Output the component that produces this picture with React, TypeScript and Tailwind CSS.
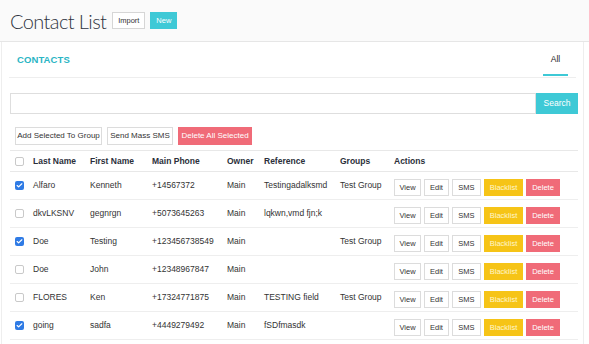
import { Check } from "lucide-react";

type Contact = {
  last: string;
  first: string;
  phone: string;
  owner: string;
  reference: string;
  group: string;
  checked: boolean;
};

const contacts: Contact[] = [
  { last: "Alfaro", first: "Kenneth", phone: "+14567372", owner: "Main", reference: "Testingadalksmd", group: "Test Group", checked: true },
  { last: "dkvLKSNV", first: "gegnrgn", phone: "+5073645263", owner: "Main", reference: "lqkwn,vmd fjn;k", group: "", checked: false },
  { last: "Doe", first: "Testing", phone: "+123456738549", owner: "Main", reference: "", group: "Test Group", checked: true },
  { last: "Doe", first: "John", phone: "+12348967847", owner: "Main", reference: "", group: "", checked: false },
  { last: "FLORES", first: "Ken", phone: "+17324771875", owner: "Main", reference: "TESTING field", group: "Test Group", checked: false },
  { last: "going", first: "sadfa", phone: "+4449279492", owner: "Main", reference: "fSDfmasdk", group: "", checked: true },
];

const cols = "grid grid-cols-[23px_57px_62px_75px_37px_76px_54px_1fr] items-center";

function Box({ checked }: { checked: boolean }) {
  if (checked) {
    return (
      <span className="flex h-[9px] w-[9px] items-center justify-center rounded-[2px] bg-[#2f7be5]">
        <Check className="h-[7px] w-[7px] text-white" strokeWidth={4} />
      </span>
    );
  }
  return <span className="block h-[9px] w-[9px] rounded-[2px] border border-[#c9c9c9] bg-white" />;
}

function Btn({ label, tone = "plain", className = "" }: { label: string; tone?: "plain" | "yellow" | "red"; className?: string }) {
  const tones = {
    plain: "border border-[#dcdcdc] bg-white text-[#333]",
    yellow: "bg-[#f6c417] text-[#fff6cc]",
    red: "bg-[#f06b78] text-white",
  };
  return (
    <span className={`flex h-[17px] items-center justify-center text-[7.5px] ${tones[tone]} ${className}`}>{label}</span>
  );
}

export default function App() {
  return (
    <div className="h-[344px] w-[589px] overflow-hidden bg-white font-['Liberation_Sans',Arial,sans-serif] text-[#333]">
      {/* Page header */}
      <div className="flex h-[42px] items-center border-b border-[#e6e6e6] bg-[#fafafa] pl-[10px]">
        <h1 className="font-['Lato',sans-serif] text-[20px] font-light leading-none tracking-[-0.6px] text-[#2e3340]">Contact List</h1>
        <span className="ml-[6px] flex h-[17px] w-[33px] items-center justify-center border border-[#d6d6d6] bg-white text-[7.5px] text-[#333]">
          Import
        </span>
        <span className="ml-[5px] flex h-[17px] w-[27px] items-center justify-center bg-[#3ec9d6] text-[7.5px] text-white">
          New
        </span>
      </div>

      <div className="ml-[1px] w-[583px] border-x border-[#eeeeee] pb-4">
        {/* Tabs */}
        <div className="mx-[7px] flex h-[36px] items-center justify-between border-b border-[#eeeeee]">
          <span className="pl-[8px] pt-[1px] text-[9.5px] font-bold tracking-[0.1px] text-[#2ab5c4]">CONTACTS</span>
          <div className="mr-[8px] flex h-full w-[25px] flex-col items-center justify-end">
            <span className="mb-[8px] text-[8.5px] text-[#222]">All</span>
            <span className="mb-[1px] h-[2px] w-full bg-[#3ec9d6]" />
          </div>
        </div>

        {/* Search */}
        <div className="ml-[8px] mr-[5px] mt-[15px] flex h-[21px]">
          <div className="flex-1 border border-[#dedede] bg-white" />
          <span className="flex w-[42px] items-center justify-center bg-[#3ec9d6] text-[8.5px] text-white">Search</span>
        </div>

        {/* Bulk actions */}
        <div className="ml-[13px] mt-[13px] flex gap-[5px]">
          <Btn label="Add Selected To Group" className="h-[18px] w-[87px] text-[8px]" />
          <Btn label="Send Mass SMS" className="h-[18px] w-[66px] text-[8px]" />
          <Btn label="Delete All Selected" tone="red" className="h-[18px] w-[74px] text-[8px]" />
        </div>

        {/* Table */}
        <div className="ml-[8px] mr-[5px] mt-[5px] text-[8.5px]">
          <div className={`${cols} h-[22px] border-y border-[#e8e8e8] font-bold text-[#2b2f3a]`}>
            <span className="pl-[5px]"><Box checked={false} /></span>
            <span>Last Name</span>
            <span>First Name</span>
            <span>Main Phone</span>
            <span>Owner</span>
            <span>Reference</span>
            <span>Groups</span>
            <span>Actions</span>
          </div>
          {contacts.map((c, i) => (
            <div key={i} className={`${cols} h-[28px] border-b border-[#eeeeee] text-[#333]`}>
              <span className="pl-[5px]"><Box checked={c.checked} /></span>
              <span>{c.last}</span>
              <span>{c.first}</span>
              <span>{c.phone}</span>
              <span>{c.owner}</span>
              <span>{c.reference}</span>
              <span>{c.group}</span>
              <div className="mt-[4px] flex gap-[3px]">
                <Btn label="View" className="w-[27px]" />
                <Btn label="Edit" className="w-[25px]" />
                <Btn label="SMS" className="w-[29px]" />
                <Btn label="Blacklist" tone="yellow" className="w-[39px]" />
                <Btn label="Delete" tone="red" className="w-[34px]" />
              </div>
            </div>
          ))}
        </div>
      </div>
    </div>
  );
}
